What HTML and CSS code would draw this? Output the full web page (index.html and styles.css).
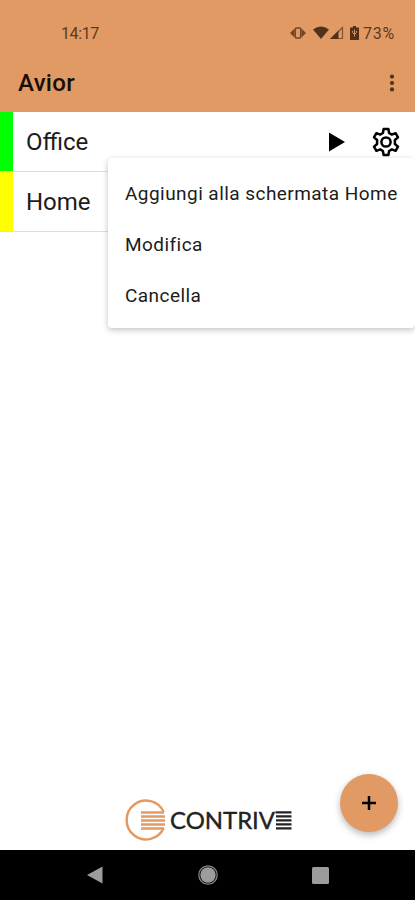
FILE: index.html
```html
<!DOCTYPE html>
<html lang="it">
<head>
<meta charset="UTF-8" />
<meta name="viewport" content="width=device-width, initial-scale=1" />
<title>Avior</title>
<link rel="stylesheet" href="styles.css">
</head>

<body>
<div class="screen">
	<div class="status-bar">
		<span class="clock">14:17</span>
		<svg class="vibrate" width="16" height="14" viewBox="0 0 16 14">
			<path d="M4.500 2.500L0 7l4.500 4.500zM11.500 2.500L16 7l-4.500 4.500z" fill="#704625" />
			<rect x="5.300" y="2" width="5.400" height="10" rx="1" fill="none" stroke="#704625" stroke-width="1.500" />
		</svg>
		<svg class="wifi" width="16" height="14" viewBox="0 0 16 14">
			<path d="M0 3.500Q8-2.500 16 3.500L8 13z" fill="#50321b" />
		</svg>
		<svg class="signal" width="14" height="14" viewBox="0 0 14 14">
			<path d="M12.500 1.500V12.500H1.500z" fill="none" stroke="#805131" stroke-width="1.200" />
			<path d="M0 13L8.500 4.500V13z" fill="#50321b" />
		</svg>
		<svg class="battery" width="9" height="14" viewBox="0 0 9 14">
			<path d="M3 0h3v1.500h3V14H0V1.500h3z" fill="#50321b" />
			<path d="M4.500 3.500v7M2.500 6.500v-1.500M6.500 6.500v-1.500M2.500 6.500l2 2 2-2" fill="none" stroke="#d99462" stroke-width="1" />
		</svg>
		<span class="percent">73%</span>
	</div>

	<div class="app-bar">
		<div class="title">Avior</div>
		<svg width="6" height="18" viewBox="0 0 6 18" fill="#50321b">
			<circle cx="3" cy="2.600" r="2.100" /><circle cx="3" cy="9" r="2.100" /><circle cx="3" cy="15.400" r="2.100" />
		</svg>
	</div>

	<div class="list">
		<div class="row green">
			<span class="name">Office</span>
			<svg class="play" width="16" height="20" viewBox="0 0 16 20"><path d="M0 .5L16 10 0 19.500z" /></svg>
			<svg class="gear" width="28" height="30" viewBox="0 0 28 30" fill="none" stroke="#000" stroke-width="2.500" stroke-linejoin="round">
				<path d="M11.600 2h4.800l.7 4 2.700 1.600 3.800-1.400 2.400 4.200-3.100 2.600v4l3.100 2.600-2.400 4.200-3.800-1.400-2.700 1.600-.7 4h-4.800l-.7-4-2.700-1.600-3.800 1.400-2.400-4.200 3.100-2.600v-4l-3.100-2.600 2.400-4.200 3.800 1.400 2.700-1.600z" />
				<circle cx="14" cy="15" r="4.600" />
			</svg>
			<div class="menu">
				<div class="item">Aggiungi alla schermata Home</div>
				<div class="item">Modifica</div>
				<div class="item">Cancella</div>
			</div>
		</div>
		<div class="row yellow">
			<span class="name">Home</span>
		</div>
	</div>

	<div class="footer">
		<svg class="logo" width="170" height="44" viewBox="0 0 170 44">
			<path d="M40.700 14A19.400 19.400 0 1 0 40.700 30" fill="none" stroke="#e39a62" stroke-width="2.500" />
			<path d="M18 14.500h23M18 18.500h24M18 22.500h24M18 26.500h24M18 30.500h23" stroke="#e39a62" stroke-width="2.500" />
			<text class="logo-text" x="47" y="30.500" textLength="105" lengthAdjust="spacingAndGlyphs">CONTRIV</text>
			<path d="M152.500 14.300h16M153 18.300h15.500M153 22.300h15.500M153 26.300h15.500M153 30.300h15.500" stroke="#222" stroke-width="2.200" />
		</svg>
		<div class="add">
			<svg width="14" height="14" viewBox="0 0 14 14"><path d="M7 0v14M0 7h14" stroke="#000" stroke-width="2.500" /></svg>
		</div>
	</div>

	<div class="nav-bar">
		<svg width="16" height="18" viewBox="0 0 16 18"><path d="M15.500 .5v17L0 9z" fill="#9c9c9c" /></svg>
		<svg width="20" height="20" viewBox="0 0 20 20">
			<circle cx="10" cy="10" r="9.200" fill="none" stroke="#858585" stroke-width="1.300" />
			<circle cx="10" cy="10" r="7.700" fill="#9c9c9c" />
		</svg>
		<svg width="17" height="17" viewBox="0 0 17 17"><rect width="17" height="17" rx="1.500" fill="#9c9c9c" /></svg>
	</div>
</div>
</body>
</html>
```

FILE: styles.css
```css
body { margin: 0; font-family: Roboto, "Liberation Sans", sans-serif; color: #1c1c1c; background: #fff; }

svg { display: block; flex: none; }

.screen { display: flex; flex-direction: column; height: 900px; overflow: hidden; }

.status-bar { display: flex; align-items: center; box-sizing: border-box; height: 60px; padding: 6px 20px 0 61px;
	background: #e29a64; color: #5b3a20; font-size: 16px; }
.clock { flex: 1; letter-spacing: -0.4px; }
.vibrate { margin-right: 7px; }
.wifi { margin-right: 1px; }
.signal { margin-right: 6px; }
.battery { margin-right: 4px; }
.percent { width: 32px; letter-spacing: 0.8px; white-space: nowrap; }

.app-bar { display: flex; align-items: center; justify-content: space-between; box-sizing: border-box; height: 52px; padding: 0 20px 6px 18px;
	background: #e29a64; }
.title { color: #160e08; font-size: 24px; font-weight: 500; letter-spacing: 0.3px; }

.list { flex: 1; }
.row { position: relative; display: flex; align-items: center; box-sizing: border-box; height: 60px; padding-right: 15px;
	border-bottom: 1px solid #dedede; }
.row:before { content: ""; width: 13px; height: 59px; margin-right: 13px; }
.green:before { background: #00ff00; }
.yellow:before { background: #ffff00; }
.name { flex: 1; font-size: 24px; }
.play { margin-right: 27px; }

.menu { position: absolute; z-index: 1; top: 46px; left: 108px; right: 0; box-sizing: border-box; height: 170px; padding: 10px 0 8px 17px;
	background: #fff; border-radius: 4px; box-shadow: 0 2px 6px rgba(0,0,0,0.24); }
.item { height: 51px; line-height: 51px; font-size: 19px; letter-spacing: 0.45px; white-space: nowrap; }

.footer { display: flex; align-items: flex-start; height: 77px; padding: 0 17px 0 123px; }
.logo { margin-top: 25px; }
.logo-text { font-family: Lato, sans-serif; font-size: 24px; fill: #222; stroke: #222; stroke-width: 0.4; }
.add { display: flex; align-items: center; justify-content: center; width: 58px; height: 58px; margin-top: 1px; margin-left: auto;
	background: #e29a64; border-radius: 50%; box-shadow: 0 3px 7px rgba(0,0,0,0.28); }

.nav-bar { display: flex; align-items: center; justify-content: space-between; box-sizing: border-box; height: 50px; padding: 0 86px 0 87px;
	background: #000; }
```
